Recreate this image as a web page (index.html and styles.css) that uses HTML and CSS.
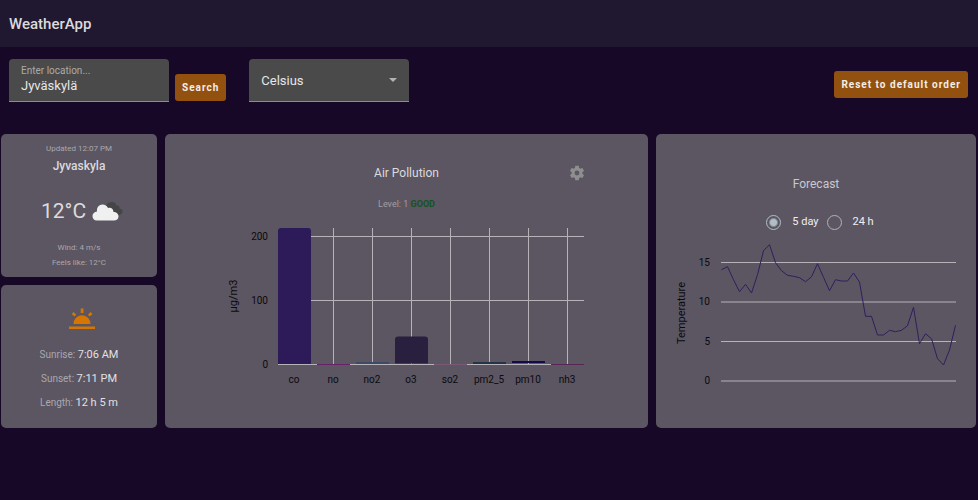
FILE: index.html
```html
<!DOCTYPE html>
<html lang="en">
<head>
<meta charset="utf-8">
<meta name="viewport" content="width=device-width, initial-scale=1">
<title>WeatherApp</title>
<link rel="stylesheet" href="styles.css">
</head>
<body>
<header class="toolbar"><h1>WeatherApp</h1></header>
<main>
  <form class="controls">
    <div class="field">
      <label for="location">Enter location...</label>
      <input id="location" type="text" value="Jyväskylä">
    </div>
    <button class="btn search" type="button">Search</button>
    <div class="picker">
      <select aria-label="Temperature unit">
        <option>Celsius</option>
        <option>Fahrenheit</option>
      </select>
      <svg class="arrow" width="8" height="4" viewBox="0 0 8 4" aria-hidden="true"><path d="M0 0h8L4 4z"/></svg>
    </div>
    <button class="btn reset" type="button">Reset to default order</button>
  </form>

  <div class="grid">
    <section class="card current">
      <p class="tiny">Updated 12:07 PM</p>
      <h2 class="city">Jyvaskyla</h2>
      <div class="now">
        <span>12°C</span>
        <svg width="31" height="20" viewBox="0 0 31 20" aria-hidden="true">
          <path class="cloud-back" d="M14 6C14.500 2.500 16.500 1 19 1.200C21 .5 24 1.500 24.500 4.500C27 4.500 28 6 27.500 7.500C30.500 8 31 10 30 12C29.500 13.500 28 14 26 14H18z"/>
          <path class="cloud-front" d="M5 19.500C2 19.500.5 17.500.5 15C.5 12.500 2.500 10.700 5 10.500C4.500 6.500 7 3.500 10.500 3.500C13 3.500 15 4.800 16 7C19 6 21.500 8 21.500 11C24.500 11 26.500 13 26.500 15.500C26.500 18 24.500 19.500 22 19.500z"/>
        </svg>
      </div>
      <p class="tiny">Wind: 4 m/s</p>
      <p class="tiny">Feels like: 12°C</p>
    </section>

    <section class="card air">
      <div class="air-head">
        <h2>Air Pollution</h2>
        <button class="gear" type="button" aria-label="Settings">
          <svg width="18" height="18" viewBox="0 0 24 24" aria-hidden="true"><path d="M19.140 12.940c.04-.3.06-.61.06-.94 0-.32-.02-.64-.07-.94l2.030-1.580c.18-.14.23-.41.12-.61l-1.920-3.320c-.12-.22-.37-.29-.59-.22l-2.390.96c-.5-.38-1.030-.7-1.620-.94l-.36-2.540c-.04-.24-.24-.41-.48-.41h-3.840c-.24 0-.43.17-.47.41l-.36 2.540c-.59.24-1.130.57-1.620.94l-2.390-.96c-.22-.08-.47 0-.59.22L2.740 8.870c-.12.21-.08.47.12.61l2.030 1.580c-.05.3-.09.63-.09.94s.02.64.07.94l-2.030 1.580c-.18.14-.23.41-.12.61l1.920 3.320c.12.22.37.29.59.22l2.390-.96c.5.38 1.030.7 1.620.94l.36 2.540c.05.24.24.41.48.41h3.840c.24 0 .44-.17.47-.41l.36-2.540c.59-.24 1.130-.56 1.620-.94l2.390.96c.22.08.47 0 .59-.22l1.920-3.320c.12-.22.07-.47-.12-.61zM12 15.200a3.200 3.200 0 1 1 0-6.400 3.200 3.200 0 0 1 0 6.400z"/></svg>
        </button>
      </div>
      <p class="level">Level: 1 <strong>GOOD</strong></p>
      <svg class="chart" width="371" height="175" viewBox="0 0 371 175" role="img" aria-label="Air pollution by component">
        <g class="lines">
          <path d="M57 16.500H363M57 80.500H363M57 144.500H363"/>
          <path d="M112.500 8V144M151.500 8V144M190.500 8V144M229.500 8V144M268.500 8V144M307.500 8V144M346.500 8V144"/>
        </g>
        <path fill="#2c1a59" d="M57 144V11a3 3 0 0 1 3-3h27a3 3 0 0 1 3 3v133z"/>
        <path fill="#28203e" d="M174 143.500V119.500a3 3 0 0 1 3-3h27a3 3 0 0 1 3 3v24z"/>
        <rect fill="#6a2069" x="96" y="144" width="33" height="1"/>
        <rect fill="#3c4a68" x="135" y="142" width="33" height="2"/>
        <rect fill="#7b5878" x="213" y="144" width="33" height="1"/>
        <rect fill="#253347" x="252" y="142" width="33" height="2"/>
        <rect fill="#140b48" x="291" y="141" width="33" height="2"/>
        <rect fill="#5c2558" x="330" y="144" width="33" height="1"/>
        <g class="ticks end"><text x="47" y="20">200</text><text x="47" y="84">100</text><text x="47" y="148">0</text></g>
        <g class="ticks middle"><text x="73" y="163">co</text><text x="112" y="163">no</text><text x="151" y="163">no2</text><text x="190" y="163">o3</text><text x="229" y="163">so2</text><text x="268" y="163">pm2_5</text><text x="307" y="163">pm10</text><text x="346" y="163">nh3</text></g>
        <text class="axis" transform="translate(16 76) rotate(-90)">µg/m3</text>
      </svg>
    </section>

    <section class="card forecast">
      <h2>Forecast</h2>
      <div class="range">
        <label><input type="radio" name="range" checked>5 day</label>
        <label><input type="radio" name="range">24 h</label>
      </div>
      <svg class="chart" width="300" height="150" viewBox="0 0 300 150" role="img" aria-label="Temperature forecast">
        <path class="hlines" d="M55 22.500H290M55 62H290M55 101.500H290M55 141H290"/>
        <polyline class="series" points="55.500,29.700 61.500,26.700 67.500,39.700 73.500,51.700 79.500,44.300 85.500,53 91.500,34.700 97.500,10.700 103.500,4.700 109.500,22.700 115.500,30.700 121.500,35.300 127.500,36.300 133.500,37.700 139.500,41.700 145.500,36.700 151.500,23.700 157.500,37.300 163.500,50.700 169.500,39.700 175.500,41 181.500,41 187.500,33 193.500,42 199.500,76.300 205.500,76.300 211.500,95 217.500,95 223.500,90.300 229.500,91.700 235.500,90.300 241.500,85.700 247.500,67.300 253.500,103.700 259.500,93.700 265.500,98.700 271.500,118.700 277.500,125 283.500,110 289.500,85.300"/>
        <g class="ticks end"><text x="44" y="26">15</text><text x="44" y="65">10</text><text x="44" y="105">5</text><text x="44" y="144">0</text></g>
        <text class="axis" transform="translate(19 73) rotate(-90)">Temperature</text>
      </svg>
    </section>

    <section class="card sun">
      <svg class="sun-icon" width="26" height="22" viewBox="0 0 26 22" aria-hidden="true">
        <path d="M4.500 16a8.500 8.800 0 0 1 17 0zM0 18.500h26v2.500H0zM11.700.5h2.800v4.500h-2.800zM2.700 6l1.900-1.900 2.700 2.600-1.900 1.900zM23.500 6l-1.900-1.900-2.700 2.600 1.900 1.900z"/>
      </svg>
      <p>Sunrise: <b>7:06 AM</b></p>
      <p>Sunset: <b>7:11 PM</b></p>
      <p>Length: <b>12 h 5 m</b></p>
    </section>
  </div>
</main>
</body>
</html>
```
FILE: styles.css
```css
* {
  box-sizing: border-box;
}

body {
  margin: 0;
  min-height: 100vh;
  background: #170828;
  color: #dcdadd;
  font-family: Roboto, "Liberation Sans", sans-serif;
  font-size: 12px;
}

h1, h2, p {
  margin: 0;
}

h2 {
  font-size: 12px;
  line-height: 16px;
  font-weight: 400;
}

.toolbar {
  display: flex;
  align-items: center;
  height: 47px;
  padding: 0 9px;
  background: #201830;
}

.toolbar h1 {
  font-size: 15px;
  font-weight: 500;
}

.controls {
  display: flex;
  align-items: flex-end;
  padding: 12px 10px 32px 9px;
}

.field, .picker {
  width: 160px;
  height: 43px;
  border-bottom: 1px solid #8c8c8c;
  border-radius: 4px 4px 0 0;
  background: #4a4a4a;
}

.field {
  display: flex;
  flex-direction: column;
  padding: 6px 12px 0;
}

.field label {
  font-size: 10px;
  line-height: 12px;
  color: #aaa;
}

.field input {
  width: 100%;
  padding: 0;
  border: 0;
  outline: 0;
  background: none;
  color: #e6e6e6;
  font: 13px/18px Roboto, sans-serif;
}

.btn {
  height: 27px;
  padding: 0 7px;
  border: 0;
  border-radius: 3px;
  background: #935110;
  color: #f4eee8;
  font: 700 10px Roboto, sans-serif;
  letter-spacing: 1px;
  white-space: nowrap;
}

.search {
  margin: 0 23px 1px 6px;
}

.reset {
  margin: 0 0 4px auto;
}

.picker {
  display: flex;
  align-items: center;
  padding-right: 12px;
}

.picker select {
  flex: 1;
  align-self: stretch;
  min-width: 0;
  padding: 0 12px;
  border: 0;
  appearance: none;
  background: none;
  color: #e6e6e6;
  font: 13px Roboto, sans-serif;
}

.arrow {
  fill: #b4b4b4;
  pointer-events: none;
}

.grid {
  display: grid;
  grid-template-columns: 156px minmax(0, 1fr) 320px;
  grid-template-rows: minmax(143px, auto) minmax(143px, auto);
  gap: 8px;
  padding: 0 2px 8px 1px;
}

.card {
  display: flex;
  flex-direction: column;
  align-items: center;
  border-radius: 5px;
  background: #5b5662;
}

.air, .forecast {
  grid-row: span 2;
}

.chart {
  max-width: 100%;
}

.current {
  padding-top: 9px;
}

.tiny {
  font-size: 8px;
  line-height: 12px;
  color: #aaa7ae;
}

.tiny + .tiny {
  margin-top: 3px;
}

.city {
  margin-top: 3px;
  font-weight: 500;
}

.now {
  display: flex;
  align-items: center;
  gap: 6px;
  height: 32px;
  margin: 21px 0 15px;
  padding-left: 6px;
  font-size: 21px;
}

.cloud-back {
  fill: #454545;
}

.cloud-front {
  fill: #f0f0f0;
}

.sun {
  gap: 12px;
  padding-top: 23px;
  font-size: 10px;
  line-height: 12px;
  color: #aaa7ae;
}

.sun b {
  font-size: 11px;
  font-weight: 400;
  color: #e2e0e3;
}

.sun-icon {
  margin: 0 0 7px 6px;
  fill: #d67600;
}

.air {
  padding-top: 30px;
}

.air-head {
  display: grid;
  grid-template-columns: 1fr auto 1fr;
  align-items: center;
  width: 371px;
  max-width: 100%;
  height: 16px;
  padding-right: 6px;
  padding-left: 6px;
}

.air-head h2 {
  grid-column: 2;
}

.gear {
  display: flex;
  justify-self: end;
  padding: 0;
  border: 0;
  background: none;
  fill: #8f8e8e;
}

.level {
  margin: 18px 0 10px;
  font-size: 9px;
  line-height: 12px;
  color: #a19ea5;
}

.level strong {
  color: #14521f;
}

.lines, .hlines {
  fill: none;
  stroke: #b5b2b8;
}

.ticks {
  fill: #0c0a0e;
  font-size: 10px;
}

.end {
  text-anchor: end;
}

.middle, .axis {
  text-anchor: middle;
}

.axis {
  fill: #0c0a0e;
  font-size: 11px;
}

.series {
  fill: none;
  stroke: #2e205c;
}

.forecast {
  padding-top: 42px;
}

.forecast h2 {
  color: #cbc8cd;
}

.range {
  display: flex;
  gap: 8px;
  margin: 22px 0 10px;
  padding-left: 8px;
}

.range label {
  display: flex;
  align-items: center;
  gap: 11px;
  font-size: 11px;
  line-height: 16px;
  color: #f0eef1;
}

.range input {
  width: 15px;
  height: 15px;
  margin: 0;
  appearance: none;
  border: 1px solid #b4b1b7;
  border-radius: 50%;
}

.range input:checked {
  border-color: #b0bec5;
  background: radial-gradient(circle, #b0bec5 3px, transparent 5px);
}
```
